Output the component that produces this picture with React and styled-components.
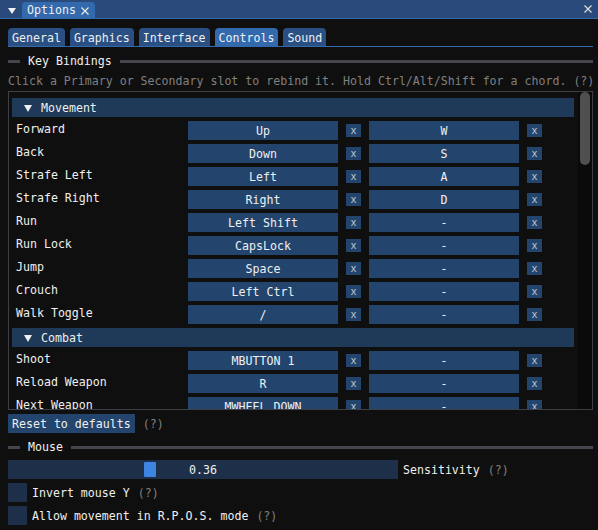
import styled, { createGlobalStyle } from 'styled-components'

const GlobalStyle = createGlobalStyle`
	html, body {
		margin: 0;
		padding: 0;
		background: #0f0f0f;
		overflow: hidden;
	}
	* {
		box-sizing: border-box;
	}
`

const Window = styled.div`
	width: 601px;
	height: 530px;
	background: #0f0f0f;
	color: #f0f0f0;
	font-family: 'DejaVu Sans Mono', 'Liberation Mono', monospace;
	font-size: 11.6px;
	line-height: 13px;
	overflow: hidden;
	white-space: pre;
`

const TitleBar = styled.div`
	height: 19px;
	display: flex;
	align-items: flex-end;
	padding: 0 9px 0 8px;
	background: #294a7a;
	border-bottom: 1px solid #3369ad;
`

const MenuArrow = styled.svg`
	width: 8px;
	height: 6px;
	margin: 0 6px 4px 0;
	flex: none;
`

const DockTab = styled.div`
	height: 16px;
	display: flex;
	align-items: center;
	padding: 1px 6px 0 5px;
	gap: 5px;
	background: #3369ad;
	border-radius: 4px 4px 0 0;
`

const CloseIcon = styled.svg`
	width: 8px;
	height: 8px;
	flex: none;
	margin-left: ${(p) => (p.$end ? 'auto' : '0')};
	align-self: ${(p) => (p.$end ? 'center' : 'auto')};
`

const Body = styled.div`
	padding: 8px 8px 0 8px;
	display: flex;
	flex-direction: column;
	gap: 4px;
`

const TabBar = styled.div`
	display: flex;
	align-items: flex-end;
	gap: 5px;
	height: 20px;
	border-bottom: 1px solid #3369ad;
`

const Tab = styled.div`
	height: 18px;
	padding: 4px 4px 0 4px;
	background: ${(p) => (p.$active ? '#3369ad' : '#2a4f82')};
	border-radius: 4px 4px 0 0;
`

const SeparatorText = styled.div`
	height: 19px;
	display: flex;
	align-items: center;
	gap: 8px;
	padding-top: 1px;
	&::before {
		content: '';
		width: 12px;
		height: 3px;
		background: #45454d;
	}
	&::after {
		content: '';
		flex: 1;
		height: 3px;
		background: #45454d;
	}
`

const Muted = styled.span`
	color: #808080;
	margin-left: ${(p) => p.$gap || 0}px;
	padding-top: 2px;
`

const HelpLine = styled.div`
	height: 13px;
	padding-top: 1px;
	color: #808080;
`

const Child = styled.div`
	height: 319px;
	border: 1px solid #3e3e47;
	display: flex;
	overflow: hidden;
`

const ChildContent = styled.div`
	flex: 1;
	padding: 6px 8px 0 7px;
	display: flex;
	flex-direction: column;
	gap: 4px;
	overflow: hidden;
`

const Scrollbar = styled.div`
	width: 14px;
	flex: none;
	background: #0a0a0a;
	padding: 0 2px;
`

const ScrollGrab = styled.div`
	height: 73px;
	border-radius: 5px;
	background: #4f4f4f;
`

const Header = styled.div`
	height: 19px;
	margin: 0 -4px;
	flex: none;
	display: flex;
	align-items: center;
	padding: 2px 0 0 12px;
	background: #1f3958;
`

const HeaderArrow = styled.svg`
	width: 8px;
	height: 7px;
	margin: -1px 9px 0 0;
	flex: none;
`

const BindRow = styled.div`
	height: 19px;
	flex: none;
	display: flex;
	align-items: center;
`

const BindLabel = styled.div`
	width: 172px;
	align-self: flex-start;
	padding-top: 2px;
`

const KeyButton = styled.div`
	width: 150px;
	height: 19px;
	background: #23456d;
	display: flex;
	align-items: center;
	justify-content: center;
	padding-top: 2px;
	margin-right: 8px;
`

const ClearButton = styled.div`
	width: 15px;
	height: 13px;
	background: #23456d;
	color: #c4cad4;
	display: flex;
	align-items: center;
	justify-content: center;
	margin-right: 8px;
	font-size: 10px;
`

const ItemRow = styled.div`
	height: 19px;
	display: flex;
	align-items: center;
`

const Button = styled.div`
	height: 19px;
	padding: 2px 4px 0 4px;
	background: #23456d;
	display: flex;
	align-items: center;
`

const Slider = styled.div`
	position: relative;
	width: 390px;
	height: 19px;
	padding-top: 2px;
	background: #1d2f49;
	display: flex;
	align-items: center;
	justify-content: center;
`

const SliderGrab = styled.div`
	position: absolute;
	top: 2px;
	width: 12px;
	height: 15px;
	background: #3d85e0;
	border-radius: 1px;
`

const Label = styled.span`
	margin-left: 5px;
	padding-top: 2px;
`

const Checkbox = styled.div`
	width: 19px;
	height: 19px;
	background: #1d2f49;
	flex: none;
`

const Cross = ({ end, color = '#e6e6e6' }) => (
	<CloseIcon $end={end} viewBox='0 0 8 8'>
		<path d='M0.5 0.5 L7.5 7.5 M7.5 0.5 L0.5 7.5' stroke={color} strokeWidth='1.3' />
	</CloseIcon>
)

const sections = [
	{
		name: 'Movement',
		rows: [
			['Forward', 'Up', 'W'],
			['Back', 'Down', 'S'],
			['Strafe Left', 'Left', 'A'],
			['Strafe Right', 'Right', 'D'],
			['Run', 'Left Shift', '-'],
			['Run Lock', 'CapsLock', '-'],
			['Jump', 'Space', '-'],
			['Crouch', 'Left Ctrl', '-'],
			['Walk Toggle', '/', '-'],
		],
	},
	{
		name: 'Combat',
		rows: [
			['Shoot', 'MBUTTON 1', '-'],
			['Reload Weapon', 'R', '-'],
			['Next Weapon', 'MWHEEL DOWN', '-'],
		],
	},
]

const tabs = ['General', 'Graphics', 'Interface', 'Controls', 'Sound']

const sensitivity = 0.36

const App = () => {
	const grabLeft = Math.round(sensitivity * 378)

	return (
		<Window>
			<GlobalStyle />
			<TitleBar>
				<MenuArrow viewBox='0 0 8 6'>
					<path d='M0 0 L8 0 L4 6 Z' fill='#f0f0f0' />
				</MenuArrow>
				<DockTab>
					<span>Options</span>
					<Cross />
				</DockTab>
				<Cross end color='#d8d8d8' />
			</TitleBar>
			<Body>
				<TabBar>
					{tabs.map((t) => (
						<Tab key={t} $active={t === 'Controls'}>
							{t}
						</Tab>
					))}
				</TabBar>
				<SeparatorText>Key Bindings</SeparatorText>
				<HelpLine>
					Click a Primary or Secondary slot to rebind it. Hold Ctrl/Alt/Shift for a chord. (?)
				</HelpLine>
				<Child>
					<ChildContent>
						{sections.map((s) => (
							<>
								<Header key={s.name}>
									<HeaderArrow viewBox='0 0 8 7'>
										<path d='M0 0 L8 0 L4 7 Z' fill='#f0f0f0' />
									</HeaderArrow>
									{s.name}
								</Header>
								{s.rows.map(([label, primary, secondary]) => (
									<BindRow key={label}>
										<BindLabel>{label}</BindLabel>
										<KeyButton>{primary}</KeyButton>
										<ClearButton>x</ClearButton>
										<KeyButton>{secondary}</KeyButton>
										<ClearButton>x</ClearButton>
									</BindRow>
								))}
							</>
						))}
					</ChildContent>
					<Scrollbar>
						<ScrollGrab />
					</Scrollbar>
				</Child>
				<ItemRow>
					<Button>Reset to defaults</Button>
					<Muted $gap={8}>(?)</Muted>
				</ItemRow>
				<SeparatorText>Mouse</SeparatorText>
				<ItemRow>
					<Slider>
						<SliderGrab style={{ left: grabLeft }} />
						{sensitivity.toFixed(2)}
					</Slider>
					<Label>Sensitivity</Label>
					<Muted $gap={8}>(?)</Muted>
				</ItemRow>
				<ItemRow>
					<Checkbox />
					<Label>Invert mouse Y</Label>
					<Muted $gap={8}>(?)</Muted>
				</ItemRow>
				<ItemRow>
					<Checkbox />
					<Label>Allow movement in R.P.O.S. mode</Label>
					<Muted $gap={8}>(?)</Muted>
				</ItemRow>
			</Body>
		</Window>
	)
}

export default App
